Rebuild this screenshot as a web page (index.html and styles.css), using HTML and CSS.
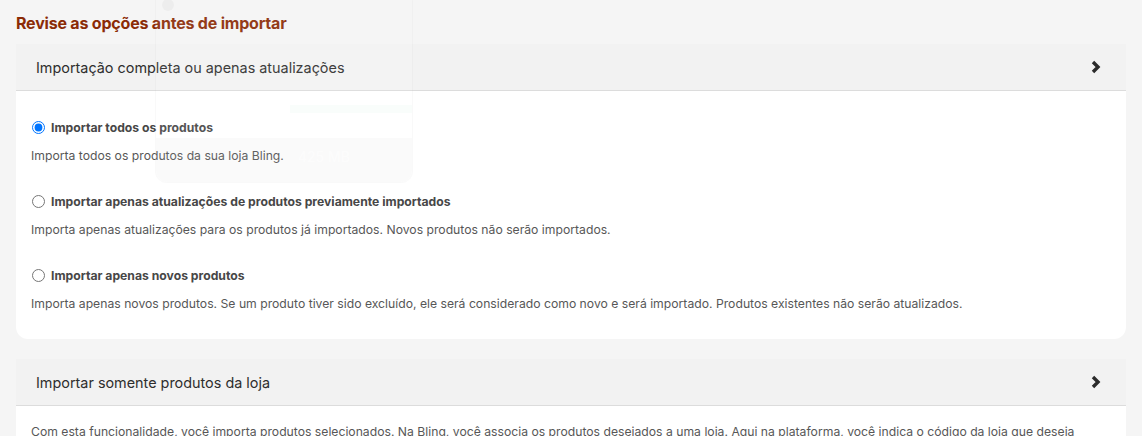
FILE: index.html
```html
<!DOCTYPE html>
<html lang="pt-BR">
<head>
<meta charset="UTF-8">
<title>Revise as opções antes de importar</title>
<link rel="stylesheet" href="styles.css">
</head>
<body>
<h1 class="page-title">Revise as opções antes de importar</h1>

<section class="panel">
  <div class="panel-header">
    <span>Importação completa ou apenas atualizações</span>
    <svg class="chevron" width="12" height="14" viewBox="0 0 12 14"><path d="M3 2 L8 7 L3 12" fill="none" stroke="#2b2b2b" stroke-width="3.4"/></svg>
  </div>
  <div class="panel-body">
    <div class="option">
      <label class="option-label"><input type="radio" name="mode" checked> Importar todos os produtos</label>
      <p class="option-desc">Importa todos os produtos da sua loja Bling.</p>
    </div>
    <div class="option">
      <label class="option-label"><input type="radio" name="mode"> Importar apenas atualizações de produtos previamente importados</label>
      <p class="option-desc">Importa apenas atualizações para os produtos já importados. Novos produtos não serão importados.</p>
    </div>
    <div class="option">
      <label class="option-label"><input type="radio" name="mode"> Importar apenas novos produtos</label>
      <p class="option-desc">Importa apenas novos produtos. Se um produto tiver sido excluído, ele será considerado como novo e será importado. Produtos existentes não serão atualizados.</p>
    </div>
  </div>
</section>

<section class="panel">
  <div class="panel-header">
    <span>Importar somente produtos da loja</span>
    <svg class="chevron" width="12" height="14" viewBox="0 0 12 14"><path d="M3 2 L8 7 L3 12" fill="none" stroke="#2b2b2b" stroke-width="3.4"/></svg>
  </div>
  <div class="panel-body panel-body-text">
    <p class="option-desc">Com esta funcionalidade, você importa produtos selecionados. Na Bling, você associa os produtos desejados a uma loja. Aqui na plataforma, você indica o código da loja que deseja importar e somente os produtos associados a ela serão importados.</p>
  </div>
</section>

<!-- card fantasma que fica por cima, quase transparente -->
<div class="ghost">
  <div class="ghost-top">
    <span class="ghost-dot"></span>
    <span class="ghost-bar"></span>
  </div>
  <div class="ghost-bottom">425 MB</div>
</div>
</body>
</html>
```

FILE: styles.css
```css
body {
  margin: 0;
  padding: 0 16px 40px;
  background-color: #f5f5f5;
  font-family: Inter, "Open Sans", sans-serif;
  color: #333;
  position: relative;
}

.page-title {
  margin: 0;
  padding-top: 13px;
  height: 31px;
  font-size: 16px;
  font-weight: 700;
  color: #8b2b06;
  letter-spacing: -0.2px;
}

.panel {
  background: #fff;
  border-radius: 0 0 12px 12px;
  margin-bottom: 20px;
}

.panel-header {
  display: flex;
  align-items: center;
  justify-content: space-between;
  height: 46px;
  padding: 0 24px 0 20px;
  background-color: #f2f2f2;
  border-bottom: 1px solid #dcdcdc;
  font-size: 14.4px;
  color: #2e2e2e;
}

.panel-body {
  padding: 28px 15px 26px;
}

.panel-body-text {
  padding-top: 17px;
}

.option {
  margin-bottom: 28px;
}

.option:last-child {
  margin-bottom: 0;
}

.option-label {
  display: flex;
  align-items: center;
  gap: 6px;
  font-size: 12.2px;
  font-weight: 700;
  color: #474747;
  height: 16px;
}

.option-label input {
  margin: 0 0 0 1px;
  width: 13px;
  height: 13px;
}

.option-desc {
  margin: 12px 0 0;
  font-size: 12.2px;
  line-height: 18px;
  color: #575757;
}

.panel-body-text > .option-desc {
  margin: 0;
}

.ghost {
  position: absolute;
  left: 155px;
  top: -10px;
  width: 256px;
  height: 191px;
  border-radius: 12px;
  border: 1px solid rgba(0, 0, 0, 0.025);
  background: rgba(255, 255, 255, 0.08);
  overflow: hidden;
  display: flex;
  flex-direction: column;
  pointer-events: none;
}

.ghost-top {
  flex: 1;
  position: relative;
}

.ghost-dot {
  position: absolute;
  left: 6px;
  top: 8px;
  width: 12px;
  height: 12px;
  border-radius: 50%;
  background: rgba(0, 0, 0, 0.03);
}

.ghost-bar {
  position: absolute;
  right: 0;
  top: 114px;
  width: 122px;
  height: 8px;
  background: rgba(0, 160, 80, 0.025);
}

.ghost-bottom {
  height: 44px;
  background: rgba(0, 0, 0, 0.018);
  color: rgba(255, 255, 255, 0.6);
  font-size: 14px;
  padding: 10px 0 0 142px;
  box-sizing: border-box;
}
```
